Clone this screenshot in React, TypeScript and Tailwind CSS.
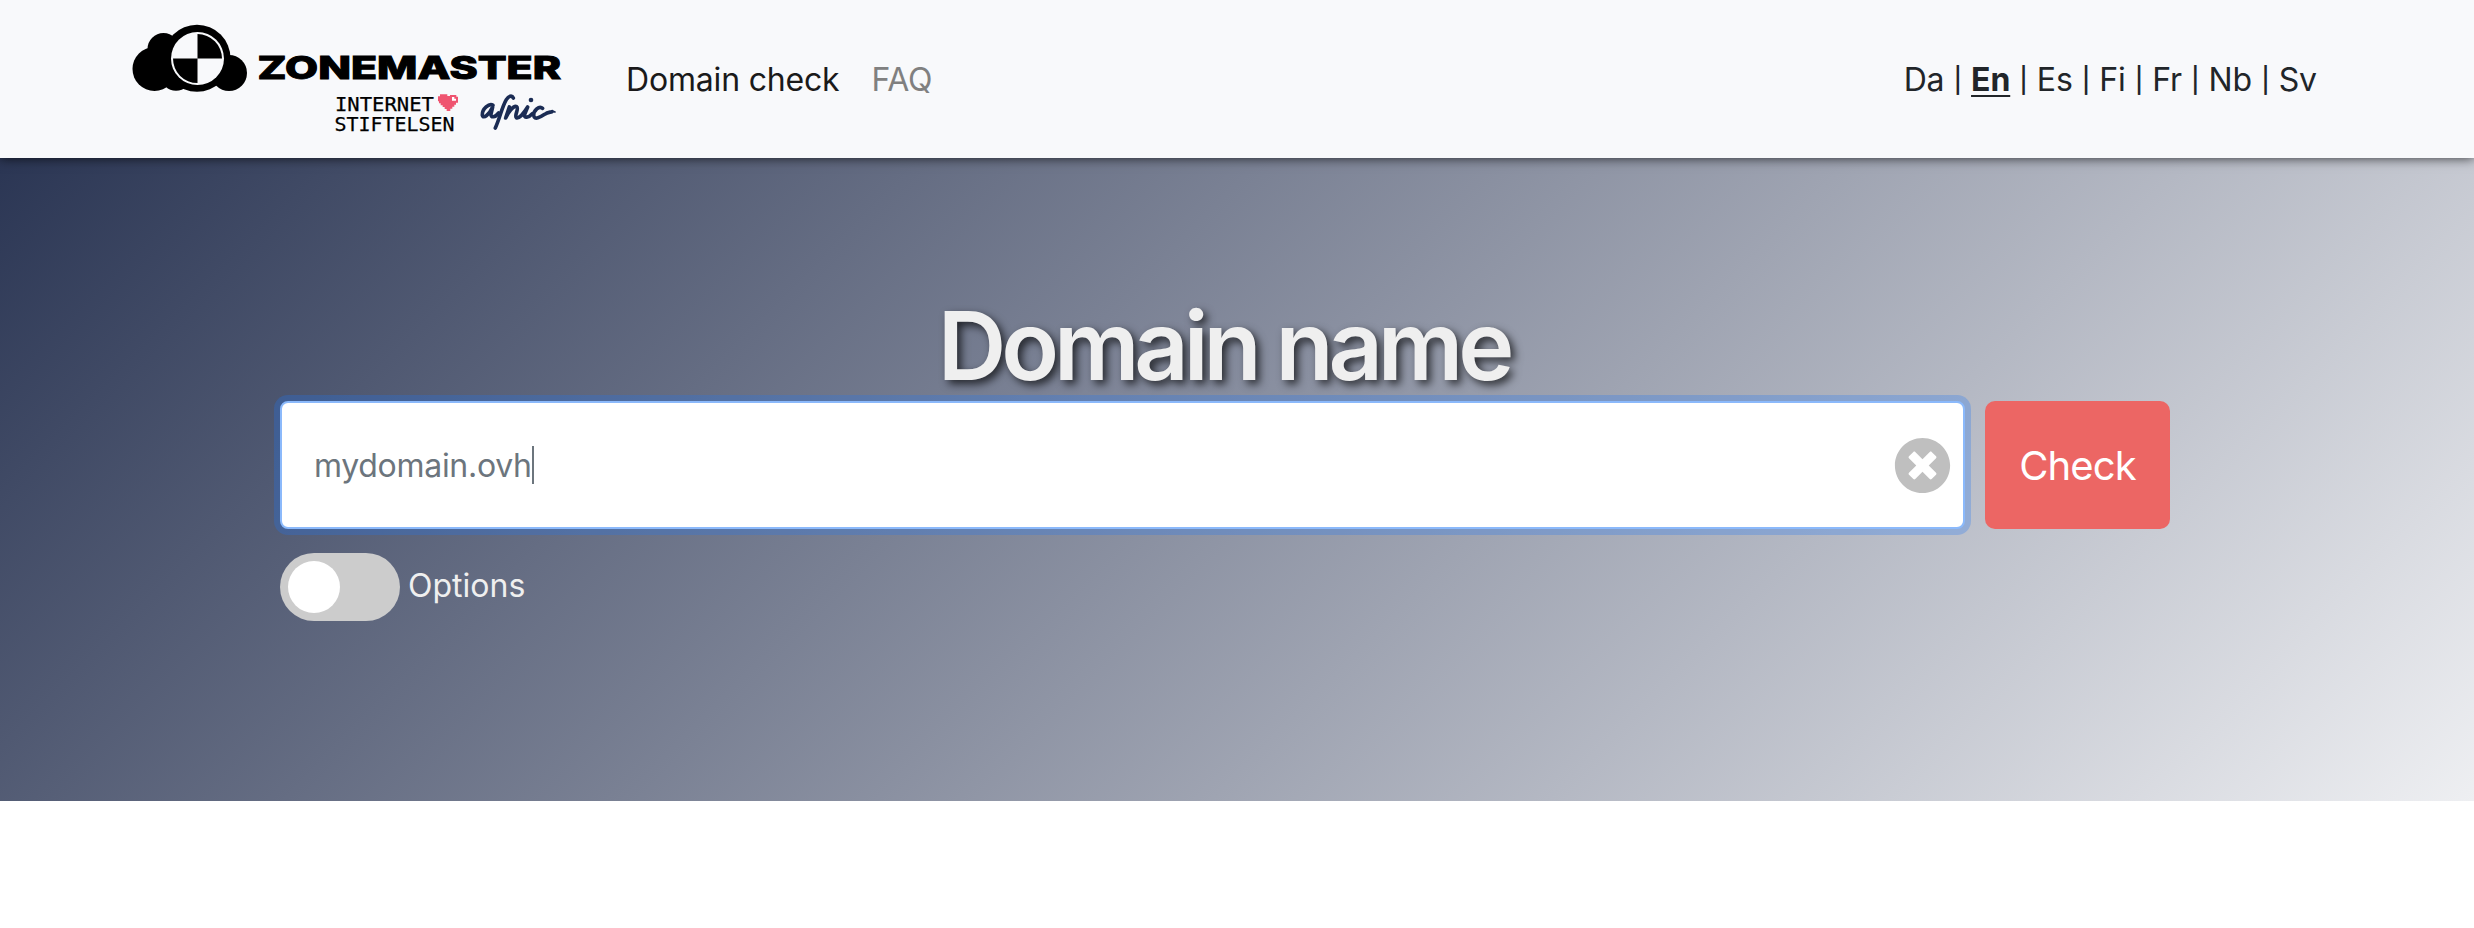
import React from "react";
import { FaTimesCircle } from "react-icons/fa";

const languages = ["Da", "En", "Es", "Fi", "Fr", "Nb", "Sv"];

function Logo() {
  return (
    <svg className="block h-[120px] w-[440px]" viewBox="126 19 440 120" aria-label="Zonemaster">
      <g fill="#000">
        <circle cx="154.500" cy="69" r="22" />
        <circle cx="163.500" cy="49" r="16" />
        <circle cx="229" cy="73" r="18" />
        <circle cx="197" cy="58.300" r="33.500" />
        <circle cx="176" cy="76" r="14.800" />
      </g>
      <circle cx="197.500" cy="58.600" r="26.500" fill="#f8f9fb" />
      <path d="M197.500 58.600V34.100A24.500 24.500 0 0 1 222 58.600ZM197.500 58.600V83.100A24.500 24.500 0 0 1 173 58.600Z" fill="#000" />
      <text x="257.500" y="79" fontFamily="Inter, sans-serif" fontWeight="800" fontSize="31" textLength="303.500" lengthAdjust="spacingAndGlyphs" stroke="#000" strokeWidth="1">ZONEMASTER</text>
      <g fontFamily="'DejaVu Sans Mono', monospace" fontSize="19.300" stroke="#000" strokeWidth=".25">
        <text x="335" y="111" textLength="99" lengthAdjust="spacingAndGlyphs">INTERNET</text>
        <text x="334.500" y="130.500" textLength="120" lengthAdjust="spacingAndGlyphs">STIFTELSEN</text>
      </g>
      <g transform="translate(320 85) scale(.3333)">
        <path d="M360 28h22v5h8v-3h19v5h5v18h-6v6h-5v6h-6v6h-6v7h-11v-6h-6v-6h-6v-5h-6v-6h-5v-6h-3V34h6z" fill="#ef5470" />
        <path d="M396 36h7v5h5v6h-12z" fill="#fff" />
        <g fill="none" stroke="#1b2c54" strokeWidth="11" strokeLinecap="round" strokeLinejoin="round">
          <path d="M519 61C508 53 486 72 487 90C490 104 508 88 518 66L513 87C512 99 525 98 536 84" />
          <path d="M580 39C576 30 566 32 559 44C546 66 540 98 526 129" />
          <path d="M568 66L557 99C564 84 580 60 590 65C598 71 582 92 589 98C597 101 611 86 623 66L614 88C611 101 626 98 637 86" />
          <path d="M668 70C657 60 641 78 641 91C643 107 662 96 674 88C683 81 690 82 696 80" />
          <path d="M690 82Q698 77 705 81" strokeWidth="5" />
        </g>
        <circle cx="633" cy="45" r="7" fill="#1b2c54" />
      </g>
    </svg>
  );
}

export default function App() {
  return (
    <div className="min-h-[928px] bg-white font-['Inter',sans-serif] text-[#212529]">
      <header className="relative flex h-[158px] items-center bg-[#f8f9fb] pr-[157px] pl-[126px] shadow-[0_0_11px_rgba(0,0,0,0.75)]">
        <Logo />
        <nav className="flex items-center gap-8 pt-px pl-[60px] text-[32px] tracking-[-0.18px]">
          <a className="text-[#1a1a1a]">Domain check</a>
          <a className="text-[#808080]">FAQ</a>
        </nav>
        <div className="ml-auto flex items-center gap-[9px] pt-px text-[32px] tracking-[-0.1px]">
          {languages.map((l, i) => (
            <React.Fragment key={l}>
              {i > 0 && <span className="pt-[3px] text-[25px] font-medium">|</span>}
              <a className={l === "En" ? "font-bold underline decoration-2 underline-offset-4" : ""}>{l}</a>
            </React.Fragment>
          ))}
        </div>
      </header>
      <main className="flex h-[643px] flex-col bg-[linear-gradient(135deg,#2b3654_0%,#eeeff2_100%)] pt-[136px] pr-[307px] pl-[280px]">
        <h1 className="h-[107px] text-center text-[95px] leading-[103px] font-semibold tracking-[-5.1px] text-[#efefef] [text-shadow:4px_4px_8px_rgba(0,0,0,0.7)]">Domain name</h1>
        <div className="flex gap-5">
          <div className="flex h-32 w-[1685px] shrink-0 items-center rounded-[8px] border-2 border-[#8bb9fb] bg-white pr-[12px] pl-8 shadow-[0_0_0_6px_rgba(28,120,247,0.27)]">
            <span className="pt-0.5 text-[32px] tracking-[-0.3px] text-[#6c757d]">mydomain.ovh</span>
            <span className="h-[38px] w-[2px] bg-[#6c757d]" />
            <FaTimesCircle className="ml-auto size-[57px] text-[#bfbfbf]" />
          </div>
          <button className="h-32 w-[185px] shrink-0 rounded-[10px] bg-[#ec6664] pt-0.5 text-[40px] tracking-[-0.9px] text-white">Check</button>
        </div>
        <div className="mt-6 flex items-center gap-2">
          <div className="h-[68px] w-[120px] rounded-full bg-[#ccc] p-2"><div className="size-[52px] rounded-full bg-white" /></div>
          <span className="pb-0.5 text-[32px] text-[#efefef]">Options</span>
        </div>
      </main>
    </div>
  );
}
